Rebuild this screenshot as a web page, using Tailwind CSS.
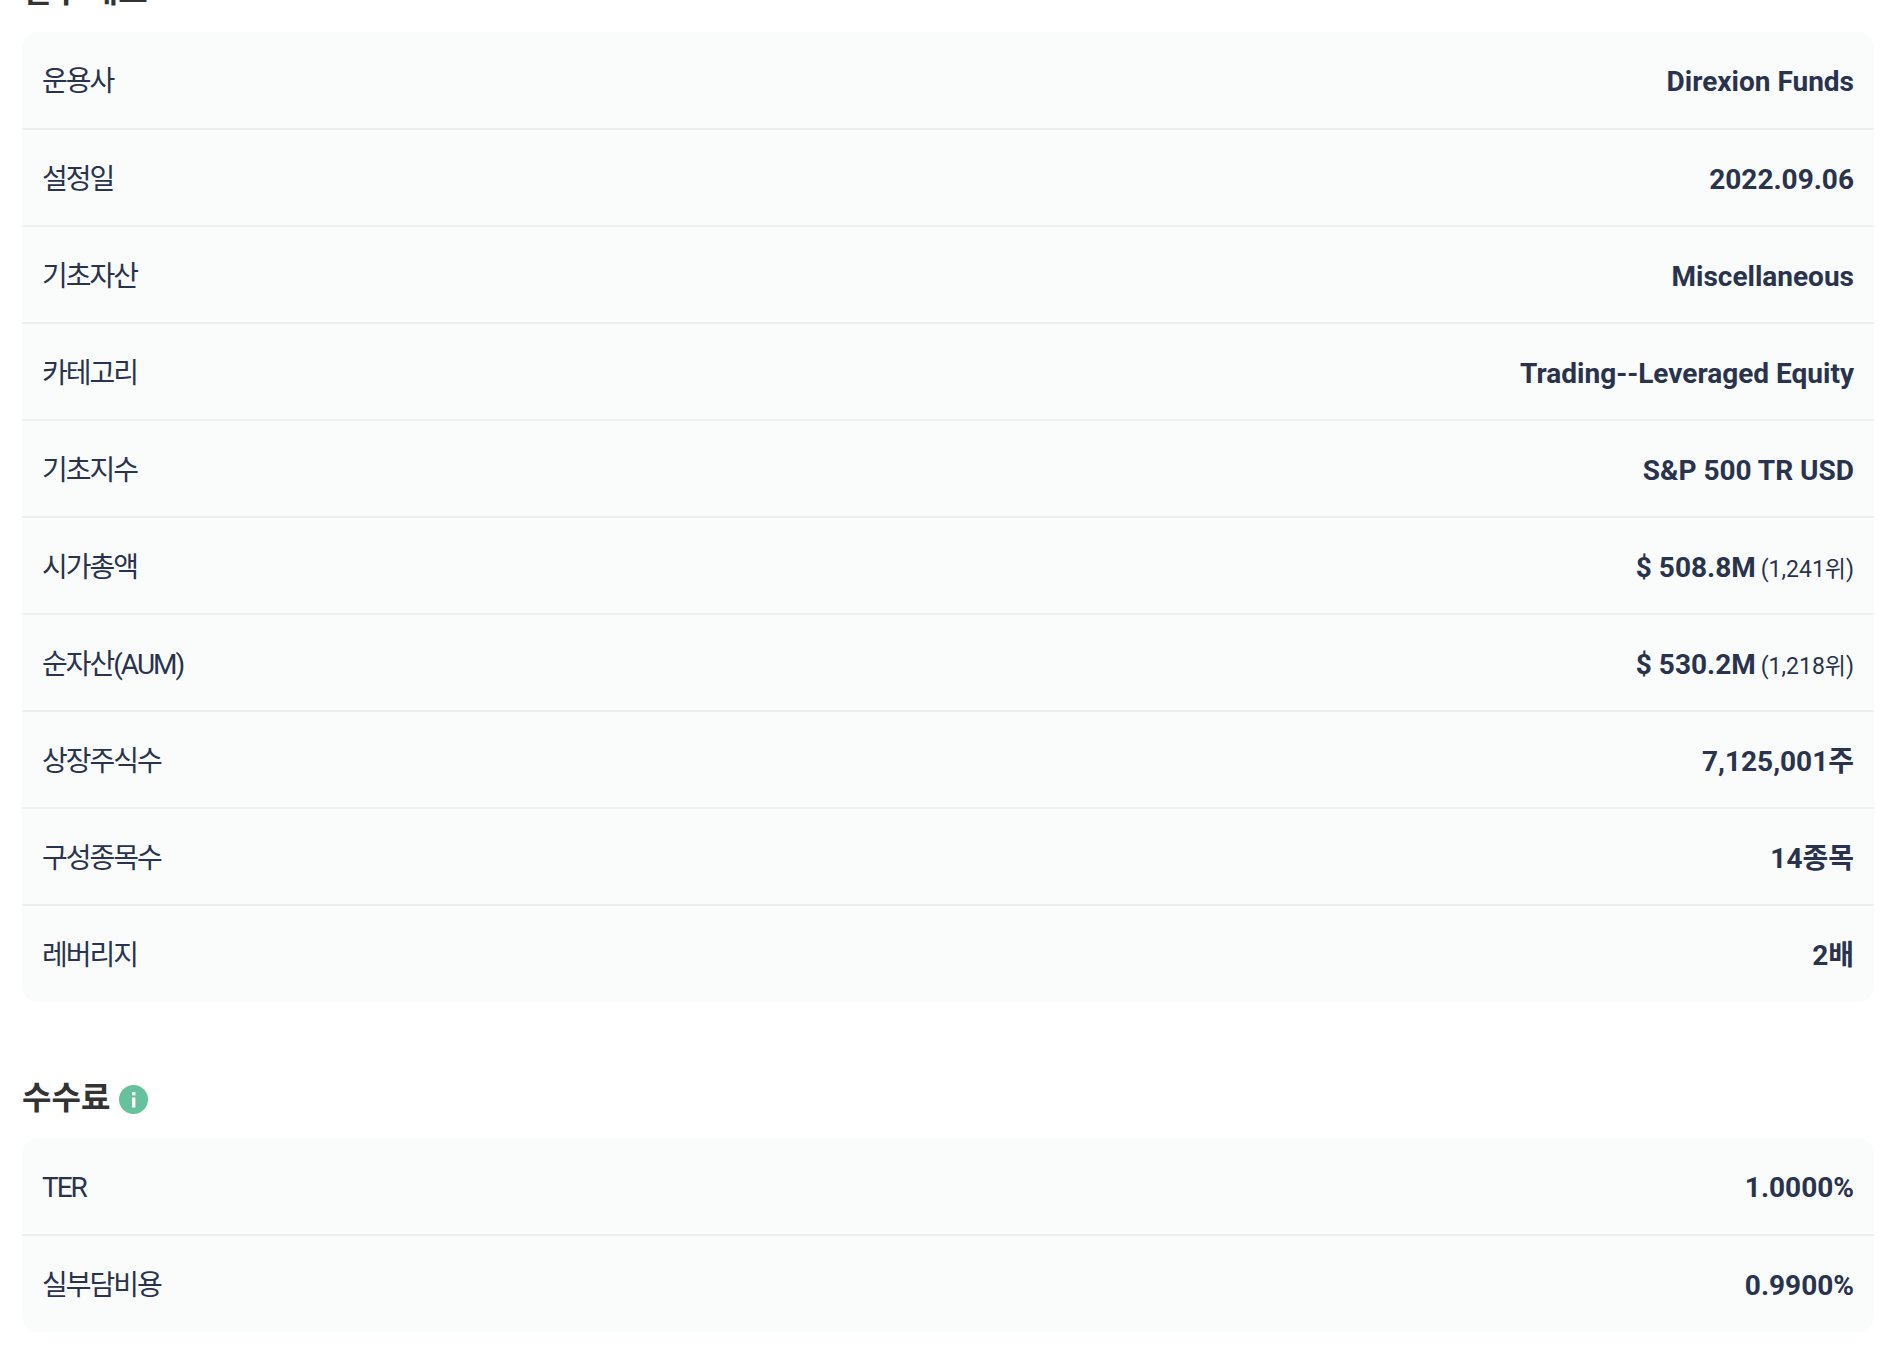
<!doctype html>
<html lang="ko">
<head>
    <meta charset="UTF-8">
    <title>ETF</title>
    <script src="https://cdn.jsdelivr.net/npm/@tailwindcss/browser@4"></script>
</head>
<body class="bg-white font-['Roboto','Noto_Sans_CJK_KR',sans-serif] text-[#29334d] overflow-hidden h-[1354px]">
<div class="px-[22px] mt-[-27px] w-[1896px]">
    <h2 class="h-[59px] text-[32px] leading-[36px] font-bold text-[#333]">일부 개요</h2>

    <dl class="bg-[#fafbfb] rounded-[16px] text-[28px]">
        <div class="flex justify-between items-center h-[98px] pt-[4px] px-[20px] border-b-2 border-[#eeefef]">
            <dt class="tracking-[-2px]">운용사</dt>
            <dd class="font-bold">Direxion Funds</dd>
        </div>
        <div class="flex justify-between items-center h-[97px] pt-[5px] px-[20px] border-b-2 border-[#eeefef]">
            <dt class="tracking-[-2px]">설정일</dt>
            <dd class="font-bold">2022.09.06</dd>
        </div>
        <div class="flex justify-between items-center h-[97px] pt-[5px] px-[20px] border-b-2 border-[#eeefef]">
            <dt class="tracking-[-2px]">기초자산</dt>
            <dd class="font-bold">Miscellaneous</dd>
        </div>
        <div class="flex justify-between items-center h-[97px] pt-[5px] px-[20px] border-b-2 border-[#eeefef]">
            <dt class="tracking-[-2px]">카테고리</dt>
            <dd class="font-bold">Trading--Leveraged Equity</dd>
        </div>
        <div class="flex justify-between items-center h-[97px] pt-[5px] px-[20px] border-b-2 border-[#eeefef]">
            <dt class="tracking-[-2px]">기초지수</dt>
            <dd class="font-bold">S&amp;P 500 TR USD</dd>
        </div>
        <div class="flex justify-between items-center h-[97px] pt-[5px] px-[20px] border-b-2 border-[#eeefef]">
            <dt class="tracking-[-2px]">시가총액</dt>
            <dd class="font-bold">$ 508.8M<span class="ml-[5px] text-[23px] font-normal">(1,241위)</span></dd>
        </div>
        <div class="flex justify-between items-center h-[97px] pt-[5px] px-[20px] border-b-2 border-[#eeefef]">
            <dt class="tracking-[-2px]">순자산(AUM)</dt>
            <dd class="font-bold">$ 530.2M<span class="ml-[5px] text-[23px] font-normal">(1,218위)</span></dd>
        </div>
        <div class="flex justify-between items-center h-[97px] pt-[5px] px-[20px] border-b-2 border-[#eeefef]">
            <dt class="tracking-[-2px]">상장주식수</dt>
            <dd class="font-bold">7,125,001주</dd>
        </div>
        <div class="flex justify-between items-center h-[97px] pt-[5px] px-[20px] border-b-2 border-[#eeefef]">
            <dt class="tracking-[-2px]">구성종목수</dt>
            <dd class="font-bold">14종목</dd>
        </div>
        <div class="flex justify-between items-center h-[96px] pt-[3px] px-[20px]">
            <dt class="tracking-[-2px]">레버리지</dt>
            <dd class="font-bold">2배</dd>
        </div>
    </dl>

    <h2 class="flex items-center gap-[9px] mt-[74px] h-[62px] pb-[18px] text-[32px] font-bold text-[#333]">
        수수료
        <svg class="w-[29px] h-[29px] mt-[2px]" viewBox="0 0 29 29">
            <circle cx="14.5" cy="14.5" r="14.5" fill="#66c29b"/>
            <rect x="13" y="7" width="3.4" height="3.4" fill="#fff"/>
            <rect x="13" y="12.5" width="3.4" height="10" fill="#fff"/>
        </svg>
    </h2>

    <dl class="bg-[#fafbfb] rounded-[16px] text-[28px]">
        <div class="flex justify-between items-center h-[98px] pt-[4px] px-[20px] border-b-2 border-[#eeefef]">
            <dt class="tracking-[-2px]">TER</dt>
            <dd class="font-bold">1.0000%</dd>
        </div>
        <div class="flex justify-between items-center h-[96px] pt-[3px] px-[20px]">
            <dt class="tracking-[-2px]">실부담비용</dt>
            <dd class="font-bold">0.9900%</dd>
        </div>
    </dl>
</div>
</body>
</html>
